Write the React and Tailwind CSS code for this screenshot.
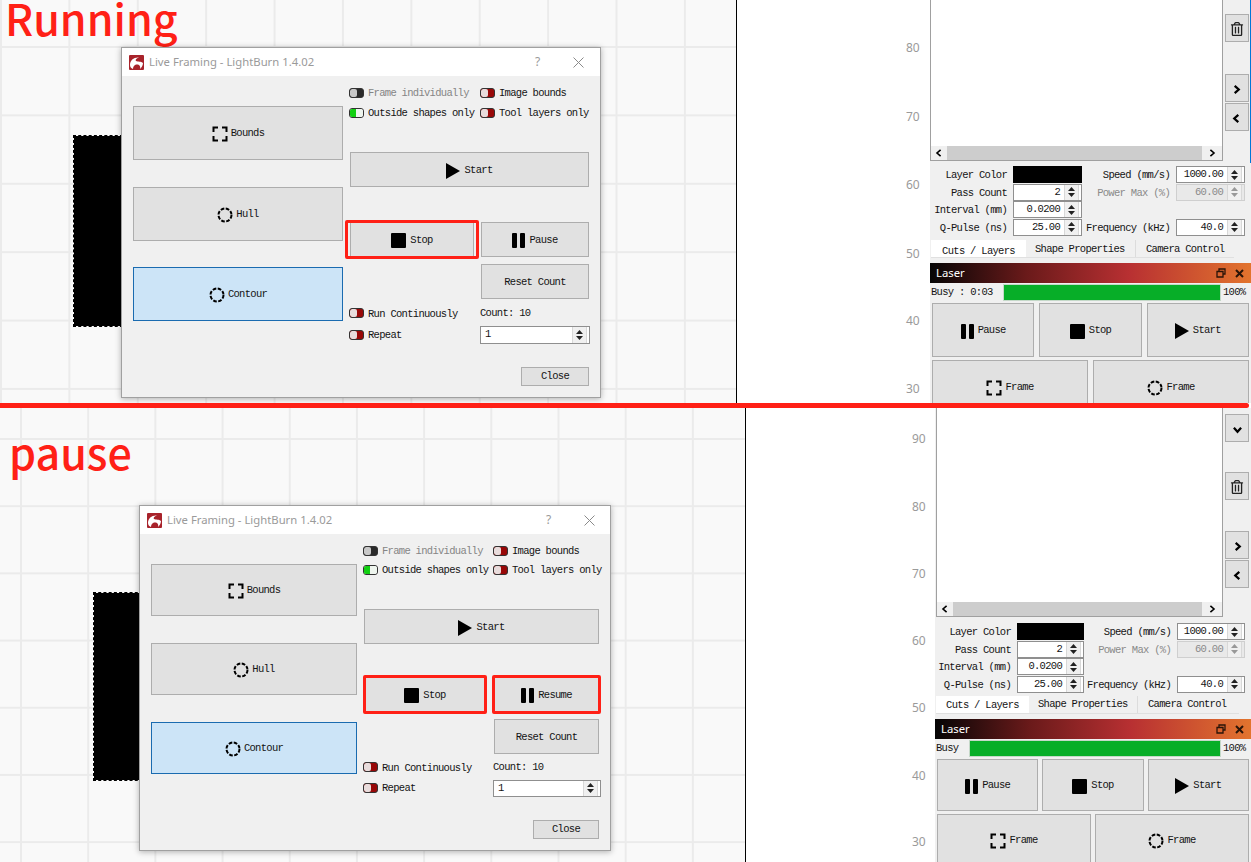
import React from "react";
import { FaRegTrashAlt } from "react-icons/fa";

const btn = "flex items-center justify-center gap-[3px] pt-[2px] bg-[#e1e1e1] border border-[#adadad]";

const BoundsIcon = () => (
  <svg width="16" height="16" viewBox="0 0 16 16" fill="none" stroke="#000" strokeWidth="2">
    <path d="M6 1.500H1.500V6M10 1.500H14.500V6M6 14.500H1.500V10M10 14.500H14.500V10" />
  </svg>
);

const HullIcon = () => (
  <svg width="16" height="16" viewBox="0 0 16 16" fill="none" stroke="#000" strokeWidth="2">
    <circle cx="8" cy="8" r="6.500" strokeDasharray="3.600 1.500" />
  </svg>
);

const StopIcon = () => <div className="w-[15px] h-[15px] bg-black rounded-[1px]" />;

const PauseIcon = () => (
  <div className="flex gap-[3px]">
    <div className="w-[5px] h-[15px] bg-black rounded-[1px]" />
    <div className="w-[5px] h-[15px] bg-black rounded-[1px]" />
  </div>
);

const PlayIcon = () => (
  <svg width="14" height="16" viewBox="0 0 14 16">
    <path d="M0 0L14 8L0 16Z" fill="#000" />
  </svg>
);

// small bold chevrons used by the scroll buttons
const Chevron = ({ d, size = 9, width = 2.5, className = "" }) => (
  <svg width={size} height={size} viewBox="0 0 10 10" fill="none" stroke="#000" strokeWidth={width} className={className}>
    <path d={d} />
  </svg>
);
const RIGHT = "M3 1L7.500 5L3 9";
const LEFT = "M7 1L2.500 5L7 9";
const DOWN = "M1 3L5 7.500L9 3";

const Logo = () => (
  <svg width="15" height="15" viewBox="0 0 15 15">
    <rect width="15" height="15" rx="1" fill="#a8232b" />
    <path d="M1 10C1 5 5 2 10 2.500C7 3.500 6 5 7 6C9 7 12 6 14 8C14 11 12 13 11 14C12 11 10 9 7 9.500C5 10 4 12 4 14C2 13 1 12 1 10Z" fill="#fff" />
    <circle cx="10.500" cy="5" r="1" fill="#a8232b" />
  </svg>
);

const Toggle = ({ kind = "off" }) => {
  if (kind === "on") {
    return (
      <div className="flex w-[15px] h-[10px] shrink-0 rounded-[3px] overflow-hidden border border-[#333]">
        <div className="flex-1 bg-[#12d012]" />
        <div className="w-[7px] bg-[#eef5ee] rounded-[2px]" />
      </div>
    );
  }
  return (
    <div className={`flex w-[15px] h-[10px] shrink-0 rounded-[3px] overflow-hidden border border-[#333] ${kind === "dark" ? "bg-[#2a2a2a]" : "bg-[#980808]"}`}>
      <div className={`w-[7px] rounded-[2px] ${kind === "dark" ? "bg-[#c8c8c8]" : "bg-[#e8dcdc]"}`} />
    </div>
  );
};

const ToggleRow = ({ kind, label, muted }) => (
  <div className="flex items-center gap-[4px] h-[14px] whitespace-nowrap">
    <Toggle kind={kind} />
    <span className={`pt-[2px] ${muted ? "text-[#858585]" : ""}`}>{label}</span>
  </div>
);

const Arrows = ({ muted }) => (
  <div className="flex flex-col items-center justify-center gap-[2px] w-[15px] h-full mr-[2px] border-x border-[#d8d8d8] bg-[#f0f0f0]">
    <svg width="7" height="4" viewBox="0 0 7 4">
      <path d="M3.500 0L7 4H0Z" fill={muted ? "#999" : "#222"} />
    </svg>
    <svg width="7" height="4" viewBox="0 0 7 4">
      <path d="M0 0H7L3.500 4Z" fill={muted ? "#999" : "#222"} />
    </svg>
  </div>
);

const Spin = ({ value, disabled, left, className = "" }) => (
  <div className={`flex items-center border ${disabled ? "bg-[#e9e9e9] border-[#cfcfcf] text-[#8a8a8a]" : "bg-white border-[#8f8f8f]"} ${className}`}>
    <span className={`flex-1 pt-[1px] px-[4px] ${left ? "text-left" : "text-right"}`}>{value}</span>
    <Arrows muted={disabled} />
  </div>
);

const RedBox = ({ className }) => (
  <div className={`absolute border-[3px] border-[#ff2016] rounded-[2px] ${className}`} />
);

const CloseGlyph = () => (
  <svg width="11" height="11" viewBox="0 0 11 11" stroke="#8a8a8a" strokeWidth="1">
    <path d="M0.500 0.500L10.500 10.500M10.500 0.500L0.500 10.500" />
  </svg>
);

const running = {
  box: "left-[121px] top-[47px] w-[480px] h-[351px]",
  helpGap: "pl-[7px] pr-[16px]",
  leftCol: "pl-[11px] w-[221px] gap-[26.500px]",
  bigBtn: "h-[54px]",
  rightCol: "ml-[6px] w-[241px]",
  toggles: "grid-cols-[131px_110px] gap-y-[6px]",
  start: "w-[239px] ml-[1px]",
  stopRow: "mt-[35px] ml-[1px] gap-[7px]",
  stop: "w-[124px]",
  stopBox: "inset-x-[-6px] inset-y-[-3px]",
  pause: "w-[108px]",
  reset: "ml-[132px] w-[108px] mt-[7px]",
  runRow: "mt-[6px] grid-cols-[131px_110px]",
  repeatRow: "mt-[4px] grid-cols-[131px_110px]",
  spin: "h-[18px] w-[110px]",
  close: "ml-[172px] w-[68px] mt-[23px]",
};

const paused = {
  box: "left-[139px] top-[97px] w-[472px] h-[346px]",
  helpGap: "pl-[7px] pr-[15px]",
  leftCol: "pl-[11px] w-[217px] gap-[27px]",
  bigBtn: "h-[52px]",
  rightCol: "ml-[6px] w-[238px]",
  toggles: "grid-cols-[130px_108px] gap-y-[5px]",
  start: "w-[235px] ml-[1px]",
  stopRow: "mt-[33px] ml-[2px] gap-[9px]",
  stop: "w-[120px]",
  stopBox: "inset-x-[-3px] inset-y-[-3px]",
  pause: "w-[105px]",
  reset: "ml-[131px] w-[105px] mt-[7px]",
  runRow: "mt-[5px] grid-cols-[130px_108px]",
  repeatRow: "mt-[4px] grid-cols-[130px_108px]",
  spin: "h-[17px] w-[108px]",
  close: "ml-[170px] w-[66px] mt-[23px]",
};

const Dialog = ({ s, resume }) => (
  <div className={`absolute ${s.box} flex flex-col bg-[#f0f0f0] border border-[#a0a0a0] shadow-[0_1px_6px_rgba(0,0,0,0.3)]`}>
    <div className={`flex items-center h-[28px] shrink-0 gap-[5px] bg-white ${s.helpGap} font-['Noto_Sans',sans-serif] tracking-normal`}>
      <Logo />
      <span className="flex-1 text-[11.300px] text-[#9a9a9a]">Live Framing - LightBurn 1.4.02</span>
      <span className="w-[33px] text-[12px] text-[#9a9a9a]">?</span>
      <CloseGlyph />
    </div>
    <div className="flex">
      <div className={`flex flex-col mt-[30px] ${s.leftCol}`}>
        <div className={`${btn} ${s.bigBtn}`}>
          <BoundsIcon />
          <span>Bounds</span>
        </div>
        <div className={`${btn} ${s.bigBtn}`}>
          <HullIcon />
          <span>Hull</span>
        </div>
        <div className={`flex items-center justify-center gap-[3px] pt-[2px] bg-[#cce4f7] border border-[#1a6bb0] ${s.bigBtn}`}>
          <HullIcon />
          <span>Contour</span>
        </div>
      </div>
      <div className={`flex flex-col pt-[10px] ${s.rightCol}`}>
        <div className={`grid ${s.toggles}`}>
          <ToggleRow kind="dark" label="Frame individually" muted />
          <ToggleRow label="Image bounds" />
          <ToggleRow kind="on" label="Outside shapes only" />
          <ToggleRow label="Tool layers only" />
        </div>
        <div className={`${btn} h-[35px] mt-[32px] gap-[4px] ${s.start}`}>
          <PlayIcon />
          <span>Start</span>
        </div>
        <div className={`flex ${s.stopRow}`}>
          <div className={`${btn} relative h-[35px] gap-[4px] ${s.stop}`}>
            <StopIcon />
            <span>Stop</span>
            <RedBox className={s.stopBox} />
          </div>
          <div className={`${btn} relative h-[35px] gap-[4px] ${s.pause}`}>
            <PauseIcon />
            <span>{resume ? "Resume" : "Pause"}</span>
            {resume && <RedBox className="inset-x-[-3px] inset-y-[-3px]" />}
          </div>
        </div>
        <div className={`${btn} h-[35px] ${s.reset}`}>Reset Count</div>
        <div className={`grid items-center ${s.runRow}`}>
          <ToggleRow label="Run Continuously" />
          <span className="pt-[1px]">Count: 10</span>
        </div>
        <div className={`grid items-center ${s.repeatRow}`}>
          <ToggleRow label="Repeat" />
          <Spin value="1" left className={s.spin} />
        </div>
        <div className={`${btn} h-[19px] ${s.close}`}>Close</div>
      </div>
    </div>
  </div>
);

const runSide = {
  panel: "w-[321px]",
  top: "h-[163px]",
  list: "h-[161px] ml-0",
  side: "pt-[14px] border-r border-r-[#0078d7]",
  gap: "h-[32px]",
  form: "h-[74px] pt-[3px] ml-[1px] grid-cols-[82px_69px_94px_69px]",
  tabs: "mt-[3px] ml-[1px]",
  tabW: "w-[95px] pt-[6px]",
  shape: "w-[110px] pl-[9px] pt-[2px]",
  camera: "pl-[10px] pt-[2px]",
  busy: "w-[73px]",
  busyText: "Busy : 0:03",
  row: "gap-[5px] px-[2px]",
  btnH: "h-[54px]",
};

const pauseSide = {
  panel: "w-[316px]",
  top: "h-[212px]",
  list: "h-[209px] ml-[1px]",
  side: "pt-[6px]",
  gap: "h-[31px]",
  form: "h-[73px] pt-[3px] ml-[1px] grid-cols-[81px_67px_93px_68px]",
  tabs: "mt-[3px] ml-[1px]",
  tabW: "w-[93px] pt-[3px]",
  shape: "w-[109px] pl-[9px] pt-[1px]",
  camera: "pl-[10px] pt-[1px]",
  busy: "w-[34px]",
  busyText: "Busy",
  row: "gap-[4px] px-[2px]",
  btnH: "h-[52px]",
};

const FormLabel = ({ children, muted }) => (
  <span className={`pr-[6px] pt-[2px] text-right whitespace-nowrap ${muted ? "text-[#8a8a8a]" : ""}`}>{children}</span>
);

const Side = ({ s, extraChevron }) => (
  <div className={`flex flex-col shrink-0 bg-[#f0f0f0] ${s.panel}`}>
    <div className={`flex shrink-0 ${s.top}`}>
      <div className={`flex flex-col justify-end flex-1 bg-white border-x border-b border-[#a0a0a0] ${s.list}`}>
        <div className="flex items-center h-[14px] bg-[#f0f0f0]">
          <Chevron d={LEFT} size={8} width={2} className="mx-[4px] shrink-0" />
          <div className="flex-1 h-full bg-[#cdcdcd]" />
          <Chevron d={RIGHT} size={8} width={2} className="mx-[6px] shrink-0" />
        </div>
      </div>
      <div className={`flex flex-col items-center w-[28px] shrink-0 ${s.side}`}>
        {extraChevron && (
          <div className={`${btn} w-[24px] h-[28px]`}>
            <Chevron d={DOWN} />
          </div>
        )}
        {extraChevron && <div className="h-[30px] shrink-0" />}
        <div className={`${btn} w-[24px] h-[28px]`}>
          <FaRegTrashAlt size={14} className="text-[#222]" />
        </div>
        <div className={`shrink-0 ${s.gap}`} />
        <div className={`${btn} w-[24px] h-[28px] mb-[1px]`}>
          <Chevron d={RIGHT} />
        </div>
        <div className={`${btn} w-[24px] h-[28px]`}>
          <Chevron d={LEFT} />
        </div>
      </div>
    </div>
    <div className={`grid auto-rows-[17px] gap-y-[0.500px] items-stretch shrink-0 ${s.form}`}>
      <FormLabel>Layer Color</FormLabel>
      <div className="bg-black" />
      <FormLabel>Speed (mm/s)</FormLabel>
      <Spin value="1000.00" />
      <FormLabel>Pass Count</FormLabel>
      <Spin value="2" />
      <FormLabel muted>Power Max (%)</FormLabel>
      <Spin value="60.00" disabled />
      <FormLabel>Interval (mm)</FormLabel>
      <Spin value="0.0200" />
      <span />
      <span />
      <FormLabel>Q-Pulse (ns)</FormLabel>
      <Spin value="25.00" />
      <FormLabel>Frequency (kHz)</FormLabel>
      <Spin value="40.0" />
    </div>
    <div className={`flex items-center h-[18px] w-[303px] shrink-0 border-b border-[#e0e0e0] ${s.tabs}`}>
      <div className={`flex items-center justify-center h-full bg-white ${s.tabW}`}>Cuts / Layers</div>
      <div className={`h-full border-r border-[#dcdcdc] ${s.shape}`}>Shape Properties</div>
      <div className={`h-full ${s.camera}`}>Camera Control</div>
    </div>
    <div className="flex items-center h-[20px] mt-[5px] shrink-0 pl-[6px] pr-[7px] gap-[9px] bg-[linear-gradient(to_right,#050505_0%,#6a1a1a_30%,#b83032_62%,#e2742e_100%)] font-['Noto_Sans',sans-serif] tracking-normal">
      <span className="flex-1 text-[11.300px] text-white">Laser</span>
      <svg width="10" height="10" viewBox="0 0 10 10" fill="none" stroke="#2a1408" strokeWidth="1.300">
        <path d="M3 3V1H9V6H7M1 3.500H7V9H1Z" />
      </svg>
      <svg width="9" height="9" viewBox="0 0 9 9" fill="none" stroke="#2a1408" strokeWidth="2">
        <path d="M1 1L8 8M8 1L1 8" />
      </svg>
    </div>
    <div className="flex items-center h-[19px] shrink-0">
      <span className={`pl-[1px] pt-[1px] shrink-0 whitespace-nowrap ${s.busy}`}>{s.busyText}</span>
      <div className="flex-1 h-[17px] bg-[#07ae28] border border-[#c4d8c8]" />
      <span className="w-[30px] pl-[2px] pt-[1px] shrink-0">100%</span>
    </div>
    <div className={`flex shrink-0 mt-[1px] ${s.row}`}>
      <div className={`${btn} flex-1 gap-[4px] ${s.btnH}`}>
        <PauseIcon />
        <span>Pause</span>
      </div>
      <div className={`${btn} flex-1 gap-[4px] ${s.btnH}`}>
        <StopIcon />
        <span>Stop</span>
      </div>
      <div className={`${btn} flex-1 gap-[4px] ${s.btnH}`}>
        <PlayIcon />
        <span>Start</span>
      </div>
    </div>
    <div className={`flex shrink-0 mt-[3px] ${s.row}`}>
      <div className={`${btn} flex-1 ${s.btnH}`}>
        <BoundsIcon />
        <span>Frame</span>
      </div>
      <div className={`${btn} flex-1 ${s.btnH}`}>
        <HullIcon />
        <span>Frame</span>
      </div>
    </div>
  </div>
);

const Tick = ({ className, children }) => (
  <span className={`absolute font-['Noto_Sans',sans-serif] text-[12px] tracking-normal text-[#9a9a9a] ${className}`}>{children}</span>
);

export default function App() {
  return (
    <div className="flex flex-col w-[1251px] h-[862px] overflow-hidden bg-white text-[#141414] font-['Liberation_Mono',monospace] text-[10.500px] tracking-[-0.7px]">
      <div className="flex h-[403px] shrink-0 overflow-hidden">
        <div className="relative w-[737px] shrink-0 overflow-hidden border-r border-black bg-[#f9f9f9] bg-[linear-gradient(to_right,#ebebeb_2px,transparent_2px),linear-gradient(to_bottom,#ebebeb_2px,transparent_2px)] bg-[size:68.400px_68.400px] bg-[position:0px_46px]">
          <div className="absolute left-[73px] top-[135px] w-[50px] h-[192px] bg-black bg-clip-padding border border-dashed border-black" />
          <span className="absolute left-[5px] top-[2px] font-['Noto_Sans_CJK_SC',sans-serif] text-[43px] leading-[30px] font-medium tracking-normal text-[#ff2016]">Running</span>
          <Dialog s={running} />
        </div>
        <div className="relative flex-1">
          <Tick className="left-[169px] top-[39px]">80</Tick>
          <Tick className="left-[169px] top-[108px]">70</Tick>
          <Tick className="left-[169px] top-[176px]">60</Tick>
          <Tick className="left-[169px] top-[245px]">50</Tick>
          <Tick className="left-[169px] top-[312px]">40</Tick>
          <Tick className="left-[169px] top-[380px]">30</Tick>
        </div>
        <Side s={runSide} />
      </div>
      <div className="h-[5px] w-[1249px] shrink-0 bg-[#ff2016] rounded-r-full" />
      <div className="flex flex-1 overflow-hidden">
        <div className="relative w-[746px] shrink-0 overflow-hidden border-r border-black bg-[#f9f9f9] bg-[linear-gradient(to_right,#ebebeb_2px,transparent_2px),linear-gradient(to_bottom,#ebebeb_2px,transparent_2px)] bg-[size:67.200px_67.200px] bg-[position:20px_30px]">
          <div className="absolute left-[93px] top-[184px] w-[50px] h-[189px] bg-black bg-clip-padding border border-dashed border-black" />
          <span className="absolute left-[9px] top-[23px] font-['Noto_Sans_CJK_SC',sans-serif] text-[43px] leading-[40px] font-medium tracking-normal text-[#ff2016]">pause</span>
          <Dialog s={paused} resume />
        </div>
        <div className="relative flex-1">
          <Tick className="left-[166px] top-[22px]">90</Tick>
          <Tick className="left-[166px] top-[90px]">80</Tick>
          <Tick className="left-[166px] top-[157px]">70</Tick>
          <Tick className="left-[166px] top-[224px]">60</Tick>
          <Tick className="left-[166px] top-[291px]">50</Tick>
          <Tick className="left-[166px] top-[359px]">40</Tick>
          <Tick className="left-[166px] top-[425px]">30</Tick>
        </div>
        <Side s={pauseSide} extraChevron />
      </div>
    </div>
  );
}
